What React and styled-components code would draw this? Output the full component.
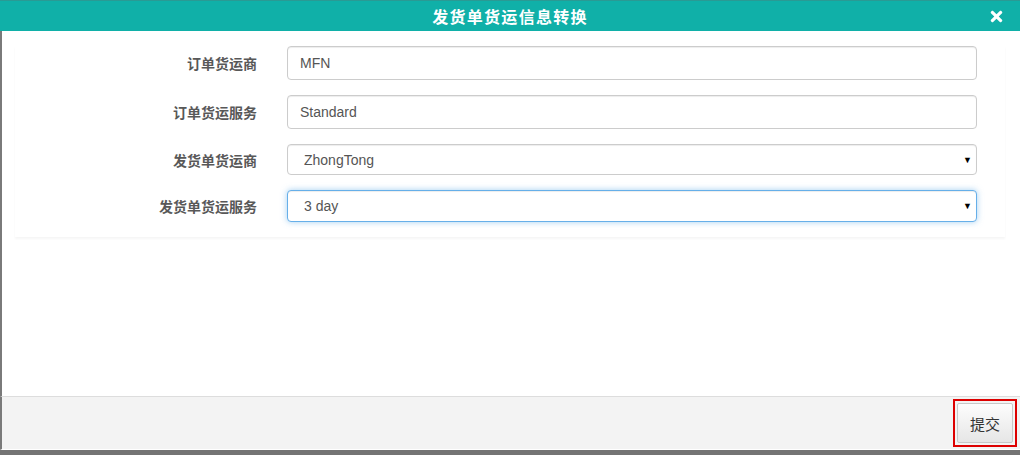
import styled, { createGlobalStyle } from 'styled-components'
import { FaTimes } from 'react-icons/fa'

const Global = createGlobalStyle`
  html, body {
    margin: 0;
    padding: 0;
    background: #747474;
  }
  body {
    font-family: "Liberation Sans", "Noto Sans CJK SC", sans-serif;
  }
`

const Page = styled.div`
  width: 1020px;
  height: 455px;
  background: #747474;
  overflow: hidden;
`

const Dialog = styled.div`
  width: 1020px;
  height: 450px;
  display: flex;
  flex-direction: column;
  background: #fff;
`

const Header = styled.div`
  height: 31px;
  flex: none;
  display: flex;
  align-items: center;
  justify-content: center;
  position: relative;
  background: #10b0a8;
  border-top: 1px solid #2a9a94;
  box-sizing: border-box;
`

const Title = styled.h3`
  margin: 0;
  color: #fff;
  font-family: "Noto Sans CJK SC", sans-serif;
  font-size: 16px;
  font-weight: 700;
  letter-spacing: 1.3px;
`

const Close = styled.span`
  position: absolute;
  right: 15px;
  top: 7px;
  color: #fff;
  display: flex;
`

const Body = styled.div`
  flex: 1;
  border-left: 2px solid #7a7a7a;
  padding: 15px 15px 0 13px;
`

const Panel = styled.div`
  display: flow-root;
  box-shadow: 0 2px 2px rgba(0, 0, 0, 0.04);
`

const Row = styled.div`
  display: grid;
  grid-template-columns: 242px 690px;
  column-gap: 30px;
  align-items: center;
  margin-bottom: 15px;
`

const Label = styled.label`
  text-align: right;
  font-family: "Noto Sans CJK SC", sans-serif;
  font-size: 14px;
  font-weight: 700;
  color: #585858;
`

const Input = styled.input`
  box-sizing: border-box;
  width: 100%;
  height: 34px;
  padding: 0 12px;
  border: 1px solid #ccc;
  border-radius: 4px;
  font-family: "Liberation Sans", sans-serif;
  font-size: 14px;
  color: #555;
  box-shadow: inset 0 1px 1px rgba(0, 0, 0, 0.075);
  outline: none;
`

const SelectWrap = styled.div`
  position: relative;
  &::after {
    content: '▼';
    position: absolute;
    right: 5px;
    top: 50%;
    transform: translateY(-50%);
    font-size: 9px;
    color: #000;
    pointer-events: none;
  }
`

const Select = styled.select`
  box-sizing: border-box;
  width: 100%;
  height: ${p => (p.$focused ? '32px' : '31px')};
  padding: 0 16px;
  appearance: none;
  -webkit-appearance: none;
  background: #fff;
  border: 1px solid ${p => (p.$focused ? '#66afe9' : '#ccc')};
  border-radius: 4px;
  font-family: "Liberation Sans", sans-serif;
  font-size: 14px;
  color: #555;
  box-shadow: ${p =>
    p.$focused
      ? 'inset 0 1px 1px rgba(0,0,0,.075), 0 0 6px rgba(102,175,233,.6)'
      : 'inset 0 1px 1px rgba(0,0,0,.075)'};
  outline: none;
`

const Footer = styled.div`
  height: 54px;
  flex: none;
  box-sizing: border-box;
  display: flex;
  justify-content: flex-end;
  align-items: center;
  padding-right: 3px;
  background: #f3f3f3;
  border-top: 1px solid #ddd;
  border-bottom: 1px solid #fff;
  border-left: 2px solid #7a7a7a;
`

const Highlight = styled.span`
  display: flex;
  padding: 2px;
  border: 2px solid #dd0000;
`

const Button = styled.button`
  width: 56px;
  height: 40px;
  border: 1px solid #c8c8c8;
  border-radius: 2px;
  background: linear-gradient(#fdfdfd, #e6e6e6);
  font-family: "Noto Sans CJK SC", sans-serif;
  font-size: 15px;
  color: #333;
  cursor: pointer;
`

const App = () => {
  return <>
    <Global />
    <Page>
      <Dialog>
        <Header>
          <Title>发货单货运信息转换</Title>
          <Close><FaTimes size={17} /></Close>
        </Header>
        <Body>
          <Panel>
            <Row>
              <Label>订单货运商</Label>
              <Input defaultValue="MFN" />
            </Row>
            <Row>
              <Label>订单货运服务</Label>
              <Input defaultValue="Standard" />
            </Row>
            <Row>
              <Label>发货单货运商</Label>
              <SelectWrap>
                <Select defaultValue="ZhongTong">
                  <option>ZhongTong</option>
                </Select>
              </SelectWrap>
            </Row>
            <Row>
              <Label>发货单货运服务</Label>
              <SelectWrap>
                <Select $focused defaultValue="3 day">
                  <option>3 day</option>
                </Select>
              </SelectWrap>
            </Row>
          </Panel>
        </Body>
        <Footer>
          <Highlight>
            <Button>提交</Button>
          </Highlight>
        </Footer>
      </Dialog>
    </Page>
  </>
}

export default App
